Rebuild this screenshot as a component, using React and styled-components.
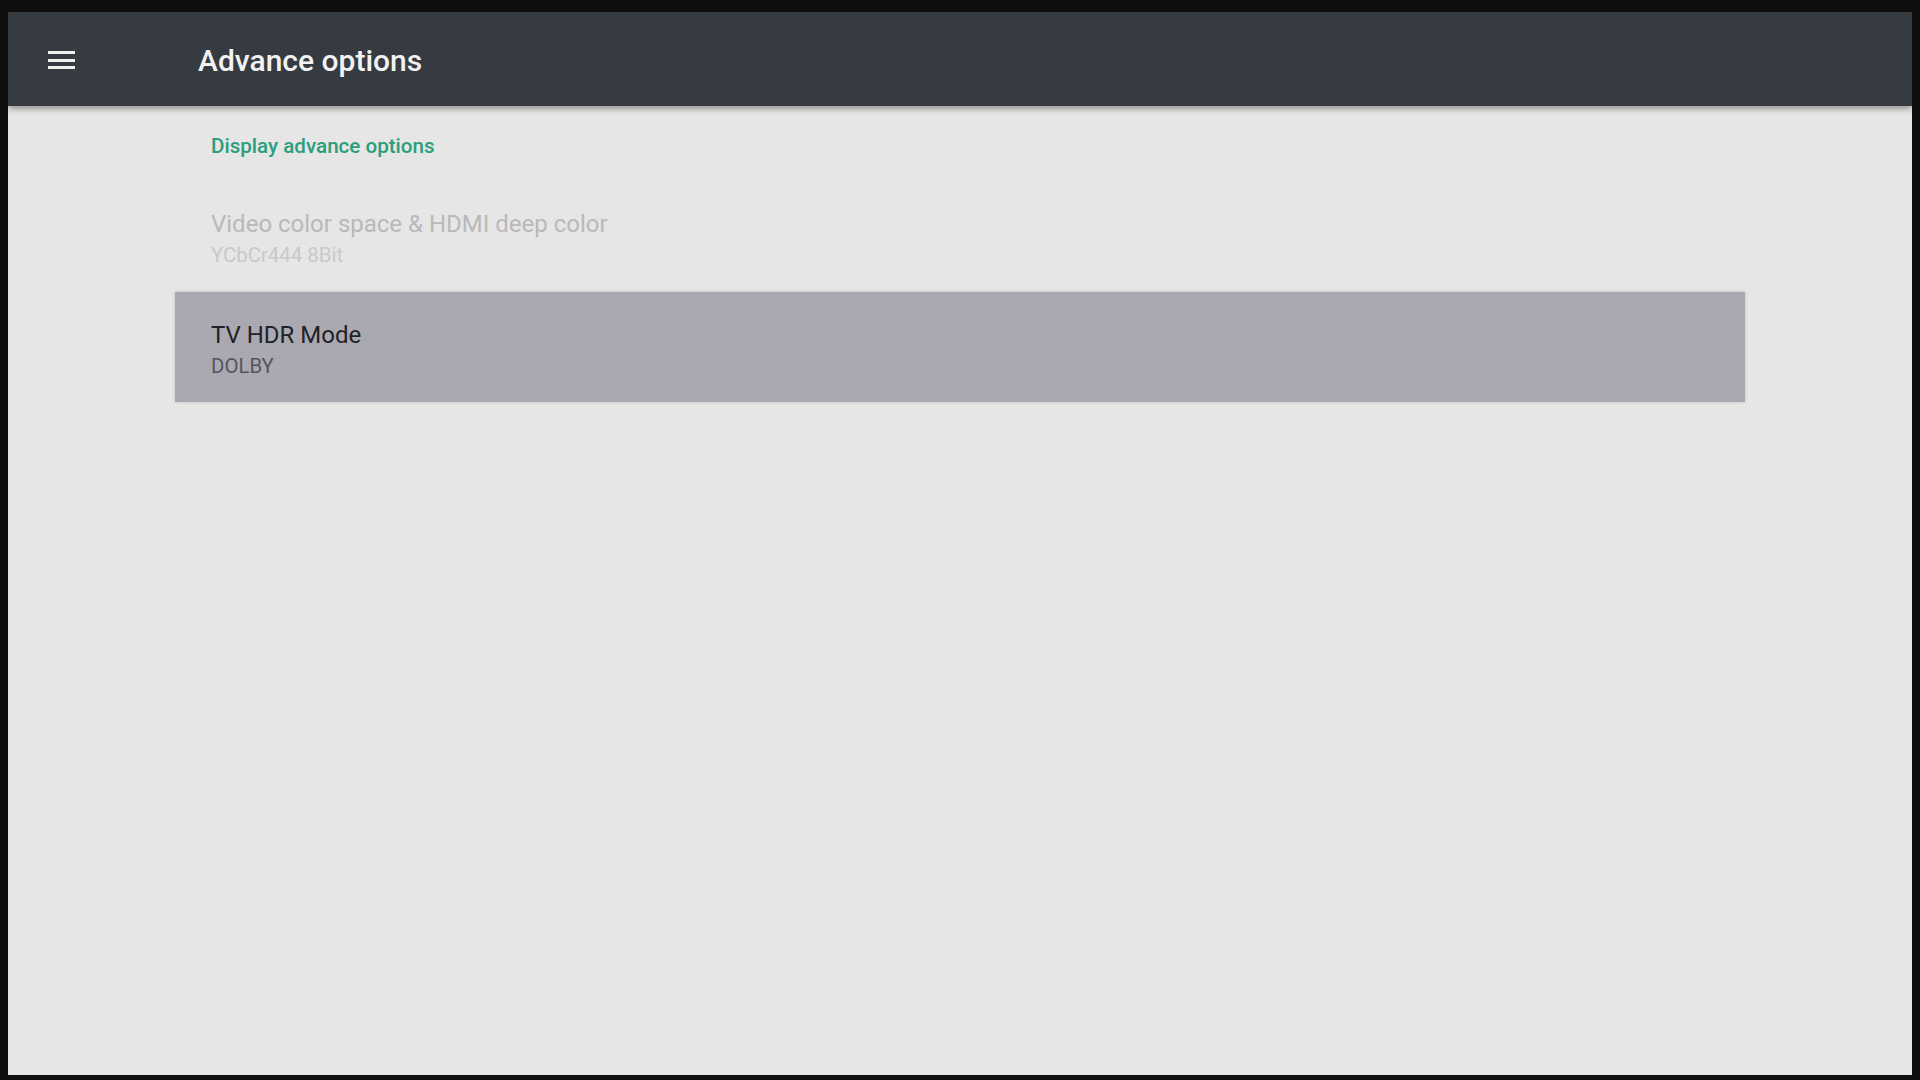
import React from 'react'
import styled, { createGlobalStyle } from "styled-components";

const GlobalStyle = createGlobalStyle`
  html, body {
    margin: 0;
    padding: 0;
    background: #0f0f0f;
    font-family: Roboto, "Noto Sans", "Liberation Sans", sans-serif;
  }
`;

const Screen = styled.div`
  height: 1063px;
  margin: 12px 8px 5px;
  background-color: #e6e6e6;
  display: flex;
  flex-direction: column;
  overflow: hidden;
`;

const TopBar = styled.div`
  height: 94px;
  flex-shrink: 0;
  background-color: #353b41;
  display: flex;
  align-items: center;
  padding-left: 40px;
  box-shadow: 0 3px 6px rgba(0, 0, 0, 0.35);
  position: relative;
  z-index: 1;
`;

const MenuButton = styled.div`
  width: 27px;
  height: 18px;
  display: flex;
  flex-direction: column;
  justify-content: space-between;
  margin-top: 2px;
`;

const MenuLine = styled.span`
  display: block;
  height: 3px;
  background-color: #f0f0f0;
`;

const Title = styled.h1`
  margin: 2px 0 0 123px;
  font-size: 30px;
  font-weight: 500;
  color: #f2f2f2;
`;

const Content = styled.div`
  padding: 25px 167px 0;
`;

const SectionTitle = styled.div`
  font-size: 20.6px;
  line-height: 30px;
  font-weight: 500;
  color: #2b9e7c;
  padding-left: 36px;
  margin-bottom: 20px;
`;

const List = styled.div`
  display: flex;
  flex-direction: column;
  gap: 1px;
`;

const Row = styled.div`
  height: 110px;
  box-sizing: border-box;
  padding: 28px 36px 0;
  background-color: ${p => (p.$focused ? "#aaa9b1" : "transparent")};
  box-shadow: ${p => (p.$focused ? "0 0 3px rgba(0, 0, 0, 0.18)" : "none")};
`;

const RowTitle = styled.div`
  font-size: 24px;
  line-height: 30px;
  color: ${p => (p.$disabled ? "#b9b9b9" : "#222226")};
`;

const RowValue = styled.div`
  font-size: 20.4px;
  line-height: 26px;
  margin-top: 3px;
  color: ${p => (p.$disabled ? "#c9c9c9" : "#55555b")};
`;

const options = [
  { title: "Video color space & HDMI deep color", value: "YCbCr444 8Bit", disabled: true },
  { title: "TV HDR Mode", value: "DOLBY", focused: true },
];

function App() {
  return (
    <>
      <GlobalStyle />
      <Screen>
        <TopBar>
          <MenuButton>
            <MenuLine />
            <MenuLine />
            <MenuLine />
          </MenuButton>
          <Title>Advance options</Title>
        </TopBar>
        <Content>
          <SectionTitle>Display advance options</SectionTitle>
          <List>
            {options.map(o => (
              <Row key={o.title} $focused={o.focused}>
                <RowTitle $disabled={o.disabled}>{o.title}</RowTitle>
                <RowValue $disabled={o.disabled}>{o.value}</RowValue>
              </Row>
            ))}
          </List>
        </Content>
      </Screen>
    </>
  )
}

export default App
